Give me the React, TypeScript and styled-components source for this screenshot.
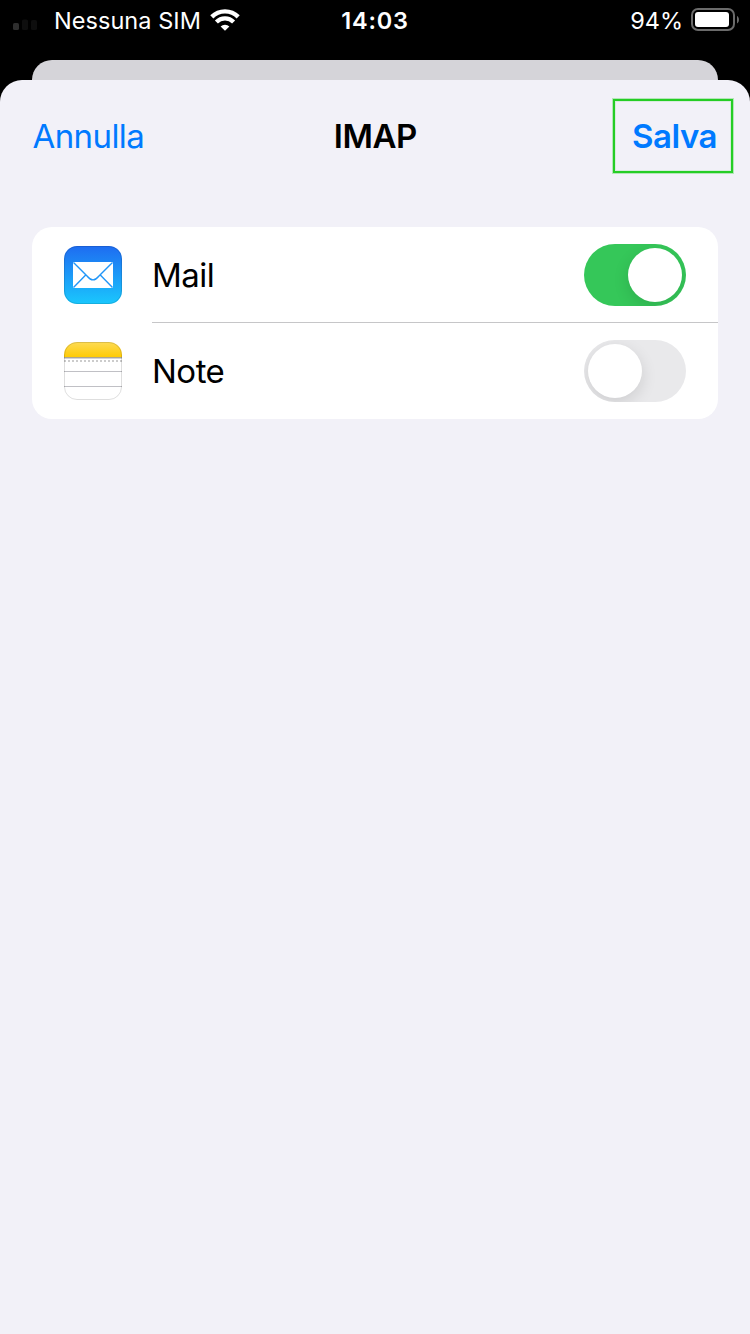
import React from "react";
import styled, { createGlobalStyle } from "styled-components";

const GlobalStyle = createGlobalStyle`
  * { box-sizing: border-box; }
  body { margin: 0; background: #000; font-family: Inter, "Liberation Sans", sans-serif; }
  button { font: inherit; background: none; border: 0; padding: 0; }
`;

const Screen = styled.div`
  width: 750px;
  height: 1334px;
  display: flex;
  flex-direction: column;
  overflow: hidden;
  background: #000;
`;

const StatusBar = styled.header`
  height: 60px;
  flex: none;
  display: grid;
  grid-template-columns: 1fr auto 1fr;
  align-items: start;
  padding: 0 10px 0 13px;
  color: #fff;
  font-size: 23.5px;
  line-height: 40px;
`;

const StatusGroup = styled.div<{ $end?: boolean }>`
  display: flex;
  height: 40px;
  align-items: center;
  justify-content: ${(p) => (p.$end ? "flex-end" : "flex-start")};
`;

const Carrier = styled.span`
  margin: 1px 9px 0 17px;
  letter-spacing: 0.05px;
`;

const Clock = styled.span`
  margin: 1px 3px 0 0;
  font-weight: 600;
  letter-spacing: 0.8px;
`;

const Percent = styled.span`
  margin: 1px 8px 0 0;
  letter-spacing: 0;
`;

const BackSheet = styled.div`
  flex: none;
  height: 20px;
  margin: 0 32px;
  border-radius: 20px 20px 0 0;
  background: #d5d4d9;
`;

const Sheet = styled.main`
  flex: 1;
  border-radius: 22px 22px 0 0;
  background: #f2f1f8;
`;

const NavBar = styled.nav`
  height: 147px;
  display: grid;
  grid-template-columns: 1fr auto 1fr;
  align-items: start;
  padding: 19px 17px 0 32.5px;
  font-size: 33px;
  line-height: 75px;
`;

const CancelButton = styled.button`
  justify-self: start;
  color: #007aff;
  letter-spacing: -0.6px;
`;

const Title = styled.h1`
  margin: 0 0 0 -15px;
  font-size: inherit;
  font-weight: 600;
  letter-spacing: -0.5px;
`;

const SaveButton = styled.button`
  justify-self: end;
  width: 120px;
  height: 74px;
  border: 2px solid #25cd25;
  box-shadow: 0 0 0 1px rgba(37, 205, 37, 0.3), inset 0 0 0 1px rgba(37, 205, 37, 0.12);
  color: #007aff;
  font-weight: 600;
  line-height: 70px;
  letter-spacing: -0.5px;
  text-indent: 3px;
`;

const Card = styled.section`
  margin: 0 32px;
  height: 192px;
  border-radius: 20px;
  background: #fff;
  overflow: hidden;
`;

const Row = styled.div`
  display: flex;
  height: 96px;
  padding-left: 32px;
`;

const IconSlot = styled.div`
  width: 88px;
  padding-top: 19px;
  svg { display: block; }
`;

const RowBody = styled.div<{ $divided?: boolean }>`
  flex: 1;
  display: flex;
  align-items: center;
  justify-content: space-between;
  padding-right: 32px;
  border-bottom: 1px solid ${(p) => (p.$divided ? "#c6c6c8" : "transparent")};
`;

const Label = styled.span`
  font-size: 33px;
  line-height: 40px;
  color: #000;
  letter-spacing: -0.5px;
  margin-top: 1px;
`;

const Track = styled.button<{ $on: boolean }>`
  display: flex;
  align-items: center;
  justify-content: ${(p) => (p.$on ? "flex-end" : "flex-start")};
  width: 102px;
  height: 62px;
  margin-top: 1px;
  padding: 4px;
  border-radius: 31px;
  overflow: hidden;
  background: ${(p) => (p.$on ? "#35c759" : "#e9e9eb")};
`;

const Knob = styled.span`
  width: 54px;
  height: 54px;
  border-radius: 50%;
  background: #fff;
  box-shadow: 0 5px 16px rgba(0, 0, 0, 0.12);
`;

const SignalIcon = () => (
  <svg width="24" height="12" viewBox="0 0 24 12">
    <rect x="0" y="4" width="6" height="7" rx="1.6" fill="#2e2e2e" />
    <rect x="9" y="0.5" width="6" height="10.5" rx="1.6" fill="#0e0e0e" />
    <rect x="18" y="1" width="6" height="10" rx="1.6" fill="#0e0e0e" />
  </svg>
);

const SignalSlot = styled.span`
  display: flex;
  width: 24px;
  margin-top: 9px;
`;

const WifiIcon = () => (
  <svg width="30" height="22" viewBox="0 0 30 22" fill="none">
    <path d="M1.8 7.9A18.6 18.6 0 0 1 28.2 7.9" stroke="#fff" strokeWidth="4.4" />
    <path d="M6.4 13A12 12 0 0 1 23.6 13" stroke="#fff" strokeWidth="4.2" />
    <path d="M15 21.8L10.6 17.4A6.4 6.4 0 0 1 19.4 17.4Z" fill="#fff" />
  </svg>
);

const BatteryIcon = () => (
  <svg width="49" height="24" viewBox="0 0 49 24" fill="none">
    <rect x="1" y="1" width="42" height="21" rx="6" stroke="#6b6b6b" strokeWidth="2" />
    <rect x="4" y="4" width="34" height="15" rx="3" fill="#fff" />
    <path d="M46 8C48.6 9 48.6 14.4 46 15.4Z" fill="#6b6b6b" />
  </svg>
);

const MailIcon = () => (
  <svg width="58" height="58" viewBox="0 0 58 58" fill="none">
    <defs>
      <linearGradient id="mail" x1="0" y1="0" x2="0" y2="1">
        <stop offset="0" stopColor="#1e6cf1" />
        <stop offset="1" stopColor="#1ac7fd" />
      </linearGradient>
    </defs>
    <rect width="58" height="58" rx="13" fill="url(#mail)" />
    <rect x="0.5" y="0.5" width="57" height="57" rx="12.5" stroke="#000" strokeOpacity="0.12" />
    <rect x="9" y="16" width="40" height="26" rx="0.8" fill="#fff" />
    <path
      d="M9.5 16.5L23.5 30.5C27 35 31 35 34.5 30.5L48.5 16.5M9.5 41.5L21.7 29M48.5 41.5L36.3 29"
      stroke="#2196f8"
      strokeWidth="1.4"
    />
  </svg>
);

const NotesIcon = () => (
  <svg width="58" height="58" viewBox="0 0 58 58" fill="none">
    <defs>
      <linearGradient id="notes" x1="0" y1="0" x2="0" y2="1">
        <stop offset="0" stopColor="#fddb55" />
        <stop offset="1" stopColor="#fecb05" />
      </linearGradient>
      <clipPath id="tile">
        <rect width="58" height="58" rx="13" />
      </clipPath>
    </defs>
    <g clipPath="url(#tile)">
      <rect width="58" height="58" fill="#fff" />
      <rect width="58" height="15" fill="url(#notes)" />
      <rect y="15" width="58" height="1" fill="#aba68f" />
      <rect y="16" width="58" height="1" fill="#d2d2d6" />
      <path d="M0 19H58" stroke="#ccc" strokeWidth="2" strokeDasharray="2 2" />
      <path d="M0 29.5H58M0 44.5H58" stroke="#c0c0c5" />
    </g>
    <rect x="0.5" y="0.5" width="57" height="57" rx="12.5" stroke="#000" strokeOpacity="0.13" />
  </svg>
);

const Toggle = ({ on = false }: { on?: boolean }) => (
  <Track $on={on} role="switch" aria-checked={on}>
    <Knob />
  </Track>
);

export default function App() {
  return (
    <Screen>
      <GlobalStyle />
      <StatusBar>
        <StatusGroup>
          <SignalSlot><SignalIcon /></SignalSlot>
          <Carrier>Nessuna SIM</Carrier>
          <WifiIcon />
        </StatusGroup>
        <Clock>14:03</Clock>
        <StatusGroup $end>
          <Percent>94%</Percent>
          <BatteryIcon />
        </StatusGroup>
      </StatusBar>
      <BackSheet />
      <Sheet>
        <NavBar>
          <CancelButton>Annulla</CancelButton>
          <Title>IMAP</Title>
          <SaveButton>Salva</SaveButton>
        </NavBar>
        <Card>
          <Row>
            <IconSlot><MailIcon /></IconSlot>
            <RowBody $divided>
              <Label>Mail</Label>
              <Toggle on />
            </RowBody>
          </Row>
          <Row>
            <IconSlot><NotesIcon /></IconSlot>
            <RowBody>
              <Label>Note</Label>
              <Toggle />
            </RowBody>
          </Row>
        </Card>
      </Sheet>
    </Screen>
  );
}
